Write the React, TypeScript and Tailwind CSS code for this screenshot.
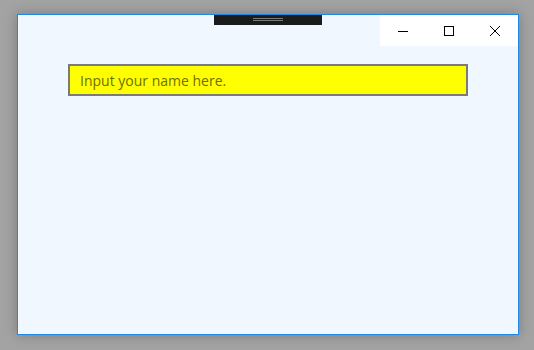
const App = () => {
  return (
    <div className="h-[350px] w-[534px] bg-[#a3a3a3] pl-[17px] pt-[14px] font-['Segoe_UI','Open_Sans',sans-serif]">
      <div className="flex h-[321px] w-[502px] flex-col border border-[#1e88e5] bg-[#f0f7ff] shadow-[0_0_12px_rgba(0,0,0,0.25)]">
        <div className="flex h-[31px] items-start">
          <div className="ml-[196px] flex h-[10px] w-[108px] flex-col items-center gap-[1px] bg-[#1b1b1b] pt-[3px]">
            <div className="h-px w-[30px] bg-[#7a7a7a]" />
            <div className="h-px w-[30px] bg-[#7a7a7a]" />
          </div>
          <div className="ml-auto flex h-[31px] w-[138px] items-center bg-white">
            <div className="flex w-[46px] justify-center">
              <div className="mt-px h-px w-[10px] bg-black" />
            </div>
            <div className="flex w-[46px] justify-center">
              <div className="h-[10px] w-[10px] border border-black" />
            </div>
            <div className="flex w-[46px] justify-center">
              <svg width="10" height="10" viewBox="0 0 10 10">
                <path d="M0 0L10 10M10 0L0 10" stroke="#000" strokeWidth="1" />
              </svg>
            </div>
          </div>
        </div>
        <div className="ml-[50px] mt-[18px] flex h-[32px] w-[400px] items-center border-2 border-[#7a7a7a] bg-[#ffff00] pl-[10px] pt-px text-[14px] text-[#6e6e00]">
          Input your name here.
        </div>
      </div>
    </div>
  );
};

export default App;
